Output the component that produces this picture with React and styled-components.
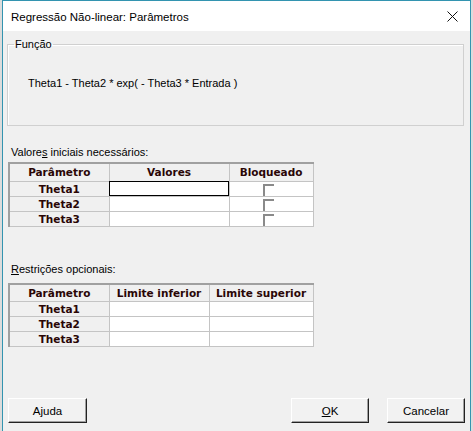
import React from 'react';
import styled, { createGlobalStyle } from 'styled-components';

const GlobalStyle = createGlobalStyle`
  html, body {
    margin: 0;
    padding: 0;
    background: #dcdcdc;
  }
  body {
    width: 473px;
    height: 431px;
    overflow: hidden;
  }
`;

const Window = styled.div`
  box-sizing: border-box;
  margin-left: 2px;
  width: 469px;
  height: 431px;
  border: 1px solid #3394b0;
  border-bottom-width: 0;
  background: #f0f0f0;
  display: flex;
  flex-direction: column;
  font-family: 'Liberation Sans', Arial, sans-serif;
  font-size: 11px;
  color: #000;
`;

const TitleBar = styled.div`
  height: 30px;
  background: #fff;
  display: flex;
  align-items: center;
  justify-content: space-between;
  padding: 0 12px 0 8px;
  flex-shrink: 0;
`;

const Title = styled.span`
  font-size: 11.5px;
  padding-top: 1px;
`;

const Body = styled.div`
  flex: 1;
  display: flex;
  flex-direction: column;
  padding: 7px 5px 8px 4px;
`;

const GroupBox = styled.fieldset`
  margin: 0 1px 0 0;
  height: 88px;
  box-sizing: border-box;
  border: 1px solid #d0d0d0;
  box-shadow: inset 1px 1px 0 #fff;
  padding: 0 0 0 20px;
  legend {
    padding: 0 1px;
    margin-left: -14px;
    line-height: 12px;
  }
`;

const Formula = styled.div`
  margin-top: 26px;
  line-height: 14px;
`;

const SectionLabel = styled.div`
  margin-top: ${p => p.$top}px;
  margin-left: 4px;
  height: 14px;
  line-height: 14px;
  u {
    text-decoration: underline;
  }
`;

const Grid = styled.table`
  margin-top: ${p => p.$top}px;
  margin-left: 1px;
  border-collapse: collapse;
  width: 304px;
  table-layout: fixed;
  border-top: 2px solid #a0a0a0;
  border-left: 2px solid #a0a0a0;
  border-right: 1px solid #c4c4c4;
  border-bottom: 1px solid #c4c4c4;
  background: #fff;
  font-family: 'DejaVu Sans', Verdana, sans-serif;
  font-size: 10.5px;
  font-weight: bold;
  color: #2a0606;
  tr {
    height: 15px;
  }
  thead tr {
    height: 18px;
  }
`;

const HeadCell = styled.th`
  padding: 0;
  background: #f0f0f0;
  border: 1px solid #c4c4c4;
  text-align: center;
  font-weight: bold;
  line-height: 12px;
`;

const RowHead = styled.th`
  padding: 0;
  background: #f0f0f0;
  border: 1px solid #c4c4c4;
  text-align: center;
  font-weight: bold;
  line-height: 12px;
`;

const Cell = styled.td`
  padding: 0;
  border: 1px solid #c4c4c4;
  outline: ${p => (p.$focus ? '1px solid #000' : 'none')};
  outline-offset: -1px;
  text-align: center;
  vertical-align: top;
  line-height: 0;
`;

const Check = styled.span`
  display: inline-block;
  box-sizing: border-box;
  width: 11px;
  height: 12px;
  margin-top: 2px;
  margin-left: -6px;
  border-top: 2px solid #8a8a8a;
  border-left: 2px solid #8a8a8a;
`;

const ButtonRow = styled.div`
  margin-top: auto;
  display: flex;
  align-items: center;
  padding-left: 1px;
`;

const Button = styled.button`
  box-sizing: border-box;
  width: ${p => p.$w}px;
  height: 25px;
  margin-left: ${p => p.$ml || 0}px;
  background: #f2f2f2;
  border: 1px solid;
  border-color: #fff #222 #222 #fff;
  box-shadow: inset -1px -1px 0 #a0a0a0;
  font-family: 'Liberation Sans', Arial, sans-serif;
  font-size: 11.5px;
  color: #000;
  padding: 0;
`;

const Spacer = styled.div`
  flex: 1;
`;

const params = ['Theta1', 'Theta2', 'Theta3'];

export default function App() {
  return (
    <>
      <GlobalStyle />
      <Window>
        <TitleBar>
          <Title>Regressão Não-linear: Parâmetros</Title>
          <svg width="11" height="11" viewBox="0 0 11 11">
            <path d="M0.5 0.5 L10.5 10.5 M10.5 0.5 L0.5 10.5" stroke="#111" strokeWidth="1" fill="none" />
          </svg>
        </TitleBar>
        <Body>
          <GroupBox>
            <legend>Função</legend>
            <Formula>Theta1 - Theta2 * exp( - Theta3 * Entrada )</Formula>
          </GroupBox>

          <SectionLabel $top={19}>
            Valore<u>s</u> iniciais necessários:
          </SectionLabel>
          <Grid $top={3}>
            <colgroup>
              <col style={{ width: 100 }} />
              <col style={{ width: 120 }} />
              <col style={{ width: 84 }} />
            </colgroup>
            <thead>
              <tr>
                <HeadCell>Parâmetro</HeadCell>
                <HeadCell>Valores</HeadCell>
                <HeadCell>Bloqueado</HeadCell>
              </tr>
            </thead>
            <tbody>
              {params.map((p, i) => (
                <tr key={p}>
                  <RowHead>{p}</RowHead>
                  <Cell $focus={i === 0} />
                  <Cell>
                    <Check />
                  </Cell>
                </tr>
              ))}
            </tbody>
          </Grid>

          <SectionLabel $top={35}>
            <u>R</u>estrições opcionais:
          </SectionLabel>
          <Grid $top={7}>
            <colgroup>
              <col style={{ width: 100 }} />
              <col style={{ width: 100 }} />
              <col style={{ width: 104 }} />
            </colgroup>
            <thead>
              <tr>
                <HeadCell>Parâmetro</HeadCell>
                <HeadCell>Limite inferior</HeadCell>
                <HeadCell>Limite superior</HeadCell>
              </tr>
            </thead>
            <tbody>
              {params.map(p => (
                <tr key={p}>
                  <RowHead>{p}</RowHead>
                  <Cell />
                  <Cell />
                </tr>
              ))}
            </tbody>
          </Grid>

          <ButtonRow>
            <Button $w={79}>Ajuda</Button>
            <Spacer />
            <Button $w={78}>
              <u>O</u>K
            </Button>
            <Button $w={78} $ml={18}>Cancelar</Button>
          </ButtonRow>
        </Body>
      </Window>
    </>
  );
}
